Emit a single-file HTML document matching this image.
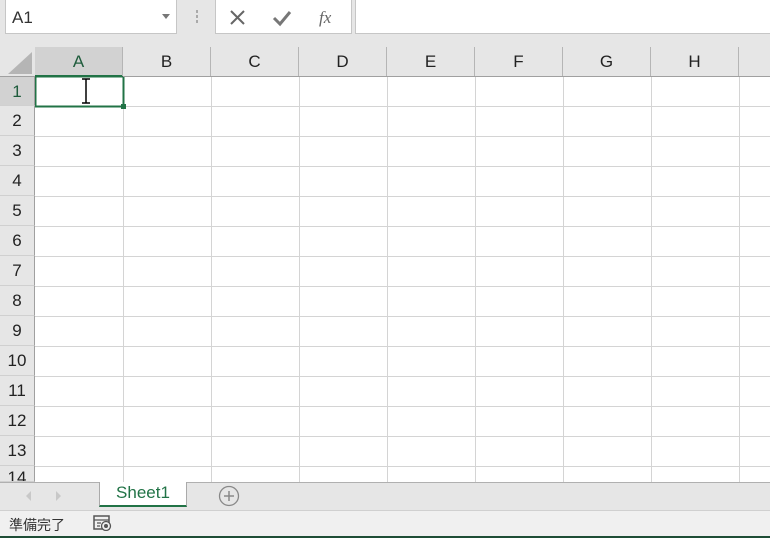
<!DOCTYPE html>
<html><head><meta charset="utf-8"><style>
*{margin:0;padding:0;box-sizing:border-box}
body{width:770px;height:538px;overflow:hidden;background:#e6e6e6;font-family:"Liberation Sans","Noto Sans CJK JP",sans-serif;position:relative}
.abs{position:absolute}
.col{position:absolute;top:47px;height:29px;font-size:17px;color:#222;text-align:center;line-height:29px;border-right:1px solid #b5b5b5}
.row{position:absolute;left:0;width:35px;height:30px;font-size:17px;color:#222;text-align:center;line-height:30px;border-bottom:1px solid #d0d0d0;border-right:1px solid #a0a0a0;background:#e6e6e6}
</style></head><body>
<div class="abs" style="left:5px;top:0;width:172px;height:34px;background:#fff;border:1px solid #c6c6c6;border-top:none"></div>
<div class="abs" style="left:12px;top:8px;font-size:17px;color:#333">A1</div>
<div class="abs" style="left:162px;top:14px;width:0;height:0;border-left:4px solid transparent;border-right:4px solid transparent;border-top:5px solid #777"></div>
<div class="abs" style="left:196px;top:10px;width:2px;height:3px;background:#aaa;box-shadow:0 5px 0 #aaa,0 10px 0 #aaa"></div>
<div class="abs" style="left:215px;top:0;width:137px;height:34px;background:#fff;border:1px solid #c6c6c6;border-top:none"></div>
<svg class="abs" style="left:228px;top:8px" width="120" height="20"><path d="M3 3L16 16M16 3L3 16" stroke="#666" stroke-width="2"/><path d="M46 10L52 16L62 4" stroke="#777" stroke-width="3" fill="none"/><text x="91" y="15" font-family="Liberation Serif" font-style="italic" font-size="17" fill="#666">fx</text></svg>
<div class="abs" style="left:355px;top:0;width:415px;height:34px;background:#fff;border:1px solid #c6c6c6;border-top:none;border-right:none"></div>
<!-- header -->
<div class="abs" style="left:0;top:76px;width:770px;height:1px;background:#a0a0a0"></div>
<svg class="abs" style="left:8px;top:52px" width="24" height="22"><path d="M24 0L24 22L0 22Z" fill="#b5b5b5"/></svg>
<div class="abs" style="left:35px;top:47px;width:88px;height:30px;background:#d2d2d2;border-bottom:2px solid #217346"></div>
<div class="col" style="left:35px;width:88px;color:#1f5c3c">A</div>
<div class="col" style="left:123px;width:88px">B</div>
<div class="col" style="left:211px;width:88px">C</div>
<div class="col" style="left:299px;width:88px">D</div>
<div class="col" style="left:387px;width:88px">E</div>
<div class="col" style="left:475px;width:88px">F</div>
<div class="col" style="left:563px;width:88px">G</div>
<div class="col" style="left:651px;width:88px">H</div>
<!-- grid -->
<svg class="abs" style="left:35px;top:77px" width="735" height="405">
<rect width="735" height="405" fill="#fff"/>
<g stroke="#d4d4d4" stroke-width="1">
<path d="M88.5 0V405M176.5 0V405M264.5 0V405M352.5 0V405M440.5 0V405M528.5 0V405M616.5 0V405M704.5 0V405"/>
<path d="M0 29.5H735M0 59.5H735M0 89.5H735M0 119.5H735M0 149.5H735M0 179.5H735M0 209.5H735M0 239.5H735M0 269.5H735M0 299.5H735M0 329.5H735M0 359.5H735M0 389.5H735"/>
</g>
<rect x="0.5" y="-0.5" width="88" height="30" fill="none" stroke="#217346" stroke-width="2"/>
<rect x="86" y="27" width="5" height="5" fill="#217346"/>
<path d="M51 2V26M47 2H55M47 26H55" stroke="#000" stroke-width="1.5"/>
</svg>
<div class="row" style="top:77px;height:29px;background:#d2d2d2;color:#1f5c3c">1</div>
<div class="row" style="top:106px">2</div><div class="row" style="top:136px">3</div><div class="row" style="top:166px">4</div><div class="row" style="top:196px">5</div><div class="row" style="top:226px">6</div><div class="row" style="top:256px">7</div><div class="row" style="top:286px">8</div><div class="row" style="top:316px">9</div><div class="row" style="top:346px">10</div><div class="row" style="top:376px">11</div><div class="row" style="top:406px">12</div><div class="row" style="top:436px">13</div><div class="row" style="top:466px;height:16px;line-height:24px;overflow:hidden">14</div>
<!-- tabs -->
<div class="abs" style="left:0;top:482px;width:770px;height:28px;background:#e6e6e6;border-top:1px solid #b0b0b0"></div>
<svg class="abs" style="left:25px;top:490px" width="40" height="12"><path d="M6 1L1 6L6 11Z" fill="#c8c8c8"/><path d="M31 1L36 6L31 11Z" fill="#c8c8c8"/></svg>
<div class="abs" style="left:99px;top:482px;width:88px;height:25px;background:#fff;border-left:1px solid #aaa;border-right:1px solid #aaa;border-bottom:2px solid #217346;color:#217346;font-size:17px;text-align:center;line-height:22px">Sheet1</div>
<svg class="abs" style="left:218px;top:485px" width="22" height="22"><circle cx="11" cy="11" r="9.5" fill="none" stroke="#888" stroke-width="1.3"/><path d="M11 6V16M6 11H16" stroke="#888" stroke-width="1.5"/></svg>
<div class="abs" style="left:0;top:510px;width:770px;height:28px;background:#f0f0f0;border-top:1px solid #d0d0d0;border-bottom:2px solid #1e4d36"></div>
<div class="abs" style="left:9px;top:515px;font-size:14px;color:#333">準備完了</div>
<svg class="abs" style="left:93px;top:515px" width="20" height="16"><rect x="1" y="1" width="15" height="13" fill="none" stroke="#555" stroke-width="1.5"/><path d="M1 5H16M4 8H8M4 11H7" stroke="#555" stroke-width="1.3"/><circle cx="13" cy="11" r="4.5" fill="#f0f0f0" stroke="#555" stroke-width="1.3"/><circle cx="13" cy="11" r="2" fill="#555"/></svg>
</body></html>
